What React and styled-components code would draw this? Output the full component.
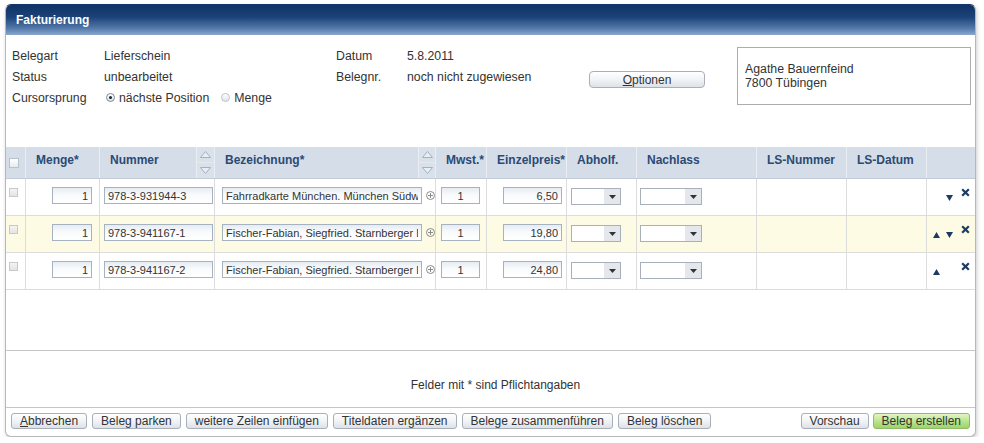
import React from "react";
import styled, { createGlobalStyle } from "styled-components";

const GlobalStyle = createGlobalStyle`
  html, body { margin: 0; padding: 0; background: #fff; }
  body {
    font-family: "Liberation Sans", Arial, sans-serif;
    font-size: 12px;
    color: #333;
  }
`;

const COLS = "20px 74px 97px 18px 204px 17px 51px 80px 70px 120px 90px 80px 48px";

const Page = styled.div`
  padding: 4px 0 0 5px;
`;

const Panel = styled.div`
  width: 971px;
  height: 433px;
  box-sizing: border-box;
  border: 1px solid #b7b7b7;
  border-top-color: #143769;
  border-radius: 6px;
  overflow: hidden;
  box-shadow: 1px 2px 4px rgba(0, 0, 0, 0.2);
  display: flex;
  flex-direction: column;
  background: #fff;
`;

const TitleBar = styled.div`
  height: 30px;
  flex: none;
  display: flex;
  align-items: center;
  padding-left: 10px;
  color: #fff;
  font-weight: bold;
  background: linear-gradient(to bottom, #0f3264 0%, #1b4279 40%, #5479aa 78%, #8aa8cd 100%);
`;

const Info = styled.div`
  height: 112px;
  flex: none;
  box-sizing: border-box;
  padding: 10px 0 0 6px;
  display: flex;
  align-items: flex-start;
  font-size: 12.3px;
`;

const InfoGrid = styled.div`
  width: ${(p) => p.$w}px;
  display: grid;
  grid-template-columns: ${(p) => p.$label}px auto;
  grid-auto-rows: 21px;
  align-items: center;
`;

const RadioGroup = styled.div`
  display: flex;
  align-items: center;
  margin-left: 2px;
`;

const RadioItem = styled.label`
  display: flex;
  align-items: center;
  gap: 4px;
  margin-right: 12px;
`;

const RadioDot = styled.span`
  width: 9px;
  height: 9px;
  box-sizing: border-box;
  border-radius: 50%;
  border: 1px solid ${(p) => (p.$on ? "#7d8a99" : "#b9c2cc")};
  background: linear-gradient(#fff, #dfe4ea);
  display: flex;
  align-items: center;
  justify-content: center;
  &::after {
    content: "";
    width: 3px;
    height: 3px;
    border-radius: 50%;
    background: ${(p) => (p.$on ? "#1d2530" : "transparent")};
  }
`;

const OptionsCol = styled.div`
  width: 116px;
  padding-top: 26px;
`;

const Button = styled.button`
  box-sizing: border-box;
  height: ${(p) => p.$h || 16}px;
  width: ${(p) => (p.$w ? `${p.$w}px` : "auto")};
  padding: 0 8px;
  border: 1px solid ${(p) => (p.$green ? "#8fba66" : "#a7afba")};
  border-radius: ${(p) => p.$r || 3}px;
  background: ${(p) =>
    p.$green
      ? "linear-gradient(#e2f6c4, #b8e38a 55%, #9fd36a)"
      : "linear-gradient(#ffffff, #f1f3f6 50%, #dde2e8)"};
  font-family: "Liberation Sans", Arial, sans-serif;
  font-size: 12px;
  line-height: 14px;
  color: #333;
  white-space: nowrap;
  cursor: pointer;
  & u { text-decoration: underline; }
`;

const AddressBox = styled.div`
  margin: 2px 0 0 32px;
  width: 234px;
  height: 58px;
  box-sizing: border-box;
  border: 1px solid #acacac;
  padding: 14px 0 0 7px;
  line-height: 14px;
`;

const HeadRow = styled.div`
  display: grid;
  grid-template-columns: ${COLS};
  height: 32px;
  box-sizing: border-box;
  background: #d5dee8;
  border-bottom: 1px solid #c3ccd7;
  flex: none;
`;

const HeadCell = styled.div`
  box-sizing: border-box;
  padding: 6px 0 0 10px;
  border-right: ${(p) => (p.$last ? "none" : "1px solid #eaeef3")};
  color: #2b4a74;
  font-weight: bold;
  line-height: 14px;
  white-space: nowrap;
`;

const HeadCheckCell = styled.div`
  box-sizing: border-box;
  padding: 11px 0 0 3px;
  border-right: 1px solid #eaeef3;
`;

const SortCell = styled.div`
  box-sizing: border-box;
  border-right: 1px solid #eaeef3;
  display: flex;
  flex-direction: column;
  background: #d9e1ea;
`;

const SortHalf = styled.div`
  flex: 1;
  display: flex;
  align-items: center;
  justify-content: center;
  border-bottom: ${(p) => (p.$top ? "1px solid #e3e9ef" : "none")};
`;

const Check = styled.span`
  display: block;
  width: ${(p) => p.$size}px;
  height: ${(p) => p.$size}px;
  box-sizing: border-box;
  border: 1px solid ${(p) => (p.$head ? "#b8c1cc" : "#c9c9c9")};
  background: ${(p) => (p.$head ? "linear-gradient(#ffffff, #e7ebf0)" : "linear-gradient(#f4f4f4, #e4e4e4)")};
`;

const Row = styled.div`
  display: grid;
  grid-template-columns: ${COLS};
  height: 37px;
  box-sizing: border-box;
  border-bottom: 1px solid #dcdcdc;
  background: ${(p) => (p.$alt ? "#fdfbe4" : "#fff")};
  flex: none;
`;

const Cell = styled.div`
  box-sizing: border-box;
  grid-column: span ${(p) => p.$span || 1};
  display: flex;
  align-items: flex-start;
  justify-content: ${(p) => (p.$end ? "flex-end" : "flex-start")};
  padding: ${(p) => p.$pt ?? 8}px ${(p) => p.$pr || 0}px 0 ${(p) => p.$pl || 0}px;
  border-right: ${(p) => (p.$last ? "none" : "1px solid #dcdcdc")};
  overflow: hidden;
`;

const Field = styled.input`
  box-sizing: border-box;
  width: ${(p) => p.$w}px;
  height: 17px;
  flex: none;
  margin: 0;
  padding: 0 3px;
  border: 1px solid #a7b2c0;
  border-radius: 0;
  background: linear-gradient(#e6ecf3, #f8fafc 45%, #ffffff);
  font-family: "Liberation Sans", Arial, sans-serif;
  font-size: 11px;
  color: #333;
  text-align: ${(p) => p.$align || "left"};
  outline: none;
`;

const Select = styled.div`
  box-sizing: border-box;
  width: ${(p) => p.$w}px;
  height: 17px;
  margin-top: 1px;
  border: 1px solid #a7b0bb;
  display: flex;
  background: #fff;
`;

const SelectArrow = styled.div`
  margin-left: auto;
  width: 16px;
  background: #e4e7ec;
  display: flex;
  align-items: center;
  justify-content: center;
`;

const PlusIcon = styled.svg`
  flex: none;
  margin: 4px 0 0 4px;
`;

const Actions = styled.div`
  display: flex;
  align-items: flex-start;
`;

const Slot = styled.div`
  width: 7px;
  height: 6px;
  margin: 11px 0 0 ${(p) => p.$ml || 0}px;
`;

const CloseSlot = styled.div`
  margin: 7px 0 0 8px;
  width: 9px;
  height: 9px;
`;

const Spacer = styled.div`
  height: 61px;
  flex: none;
  box-sizing: border-box;
  border-bottom: 1px solid #c6c6c6;
`;

const Note = styled.div`
  height: 57px;
  flex: none;
  box-sizing: border-box;
  border-bottom: 1px solid #c6c6c6;
  padding: 27px 0 0 10px;
  text-align: center;
  line-height: 14px;
`;

const Toolbar = styled.div`
  flex: 1;
  display: flex;
  align-items: flex-start;
  gap: 5px;
  padding: 5px 5px 0 5px;
`;

const RightGroup = styled.div`
  margin-left: auto;
  display: flex;
  gap: 4px;
`;

const Tri = ({ up }) => (
  <svg width="7" height="6" viewBox="0 0 7 6">
    <polygon points={up ? "3.5,0 7,6 0,6" : "0,0 7,0 3.5,6"} fill="#1d3b62" />
  </svg>
);

const Close = () => (
  <svg width="9" height="9" viewBox="0 0 9 9">
    <path d="M1.2 1.2 L7.8 7.8 M7.8 1.2 L1.2 7.8" stroke="#1d3b62" strokeWidth="2.2" />
  </svg>
);

const SortTri = ({ up }) => (
  <svg width="11" height="7" viewBox="0 0 11 7">
    <polygon
      points={up ? "5.5,0.5 10.5,6.5 0.5,6.5" : "0.5,0.5 10.5,0.5 5.5,6.5"}
      fill="#e9eef4"
      stroke="#9fb1c6"
      strokeWidth="1"
    />
  </svg>
);

const Sort = () => (
  <SortCell>
    <SortHalf $top>
      <SortTri up />
    </SortHalf>
    <SortHalf>
      <SortTri />
    </SortHalf>
  </SortCell>
);

const Dropdown = ({ w }) => (
  <Select $w={w}>
    <SelectArrow>
      <svg width="7" height="4" viewBox="0 0 7 4">
        <polygon points="0,0 7,0 3.5,4" fill="#333" />
      </svg>
    </SelectArrow>
  </Select>
);

const rows = [
  { nr: "978-3-931944-3", bez: "Fahrradkarte München. München Südwest", preis: "6,50", up: false, down: true },
  { nr: "978-3-941167-1", bez: "Fischer-Fabian, Siegfried. Starnberger Brücke", preis: "19,80", up: true, down: true, alt: true },
  { nr: "978-3-941167-2", bez: "Fischer-Fabian, Siegfried. Starnberger Brücke", preis: "24,80", up: true, down: false },
];

const heads = ["Menge*", "Nummer", null, "Bezeichnung*", null, "Mwst.*", "Einzelpreis*", "Abholf.", "Nachlass", "LS-Nummer", "LS-Datum"];

export default function App() {
  return (
    <>
      <GlobalStyle />
      <Page>
        <Panel>
          <TitleBar>Fakturierung</TitleBar>

          <Info>
            <InfoGrid $w={324} $label={92}>
              <span>Belegart</span>
              <span>Lieferschein</span>
              <span>Status</span>
              <span>unbearbeitet</span>
              <span>Cursorsprung</span>
              <RadioGroup>
                <RadioItem>
                  <RadioDot $on />
                  nächste Position
                </RadioItem>
                <RadioItem>
                  <RadioDot />
                  Menge
                </RadioItem>
              </RadioGroup>
            </InfoGrid>
            <InfoGrid $w={253} $label={71}>
              <span>Datum</span>
              <span>5.8.2011</span>
              <span>Belegnr.</span>
              <span>noch nicht zugewiesen</span>
            </InfoGrid>
            <OptionsCol>
              <Button $w={116} $h={17} $r={4}>
                <u>O</u>ptionen
              </Button>
            </OptionsCol>
            <AddressBox>
              Agathe Bauernfeind
              <br />
              7800 Tübingen
            </AddressBox>
          </Info>

          <HeadRow>
            <HeadCheckCell>
              <Check $size={10} $head />
            </HeadCheckCell>
            {heads.map((h, i) => (h === null ? <Sort key={i} /> : <HeadCell key={i}>{h}</HeadCell>))}
            <HeadCell $last />
          </HeadRow>

          {rows.map((r, i) => (
            <Row key={i} $alt={r.alt}>
              <Cell $pt={9} $pl={3}>
                <Check $size={9} />
              </Cell>
              <Cell $end $pr={7}>
                <Field $w={40} $align="right" value="1" readOnly />
              </Cell>
              <Cell $span={2} $pl={4}>
                <Field $w={109} value={r.nr} readOnly />
              </Cell>
              <Cell $span={2} $pl={7}>
                <Field $w={200} value={r.bez} readOnly />
                <PlusIcon width="9" height="9" viewBox="0 0 9 9">
                  <circle cx="4.5" cy="4.5" r="4" fill="none" stroke="#8a8a8a" strokeWidth="1" />
                  <path d="M4.5 2 V7 M2 4.5 H7" stroke="#8a8a8a" strokeWidth="1" />
                </PlusIcon>
              </Cell>
              <Cell $pl={5}>
                <Field $w={39} $align="center" value="1" readOnly />
              </Cell>
              <Cell $end $pr={4}>
                <Field $w={59} $align="right" value={r.preis} readOnly />
              </Cell>
              <Cell $pl={4}>
                <Dropdown w={50} />
              </Cell>
              <Cell $pl={3}>
                <Dropdown w={62} />
              </Cell>
              <Cell />
              <Cell />
              <Cell $last $pl={6} $pt={0}>
                <Actions>
                  <Slot>{r.up && <Tri up />}</Slot>
                  <Slot $ml={6}>{r.down && <Tri />}</Slot>
                  <CloseSlot>
                    <Close />
                  </CloseSlot>
                </Actions>
              </Cell>
            </Row>
          ))}

          <Spacer />
          <Note>Felder mit * sind Pflichtangaben</Note>

          <Toolbar>
            <Button>
              <u>A</u>bbrechen
            </Button>
            <Button>Beleg parken</Button>
            <Button>weitere Zeilen einfügen</Button>
            <Button>Titeldaten ergänzen</Button>
            <Button>Belege zusammenführen</Button>
            <Button>Beleg löschen</Button>
            <RightGroup>
              <Button>Vorschau</Button>
              <Button $green>Beleg erstellen</Button>
            </RightGroup>
          </Toolbar>
        </Panel>
      </Page>
    </>
  );
}
